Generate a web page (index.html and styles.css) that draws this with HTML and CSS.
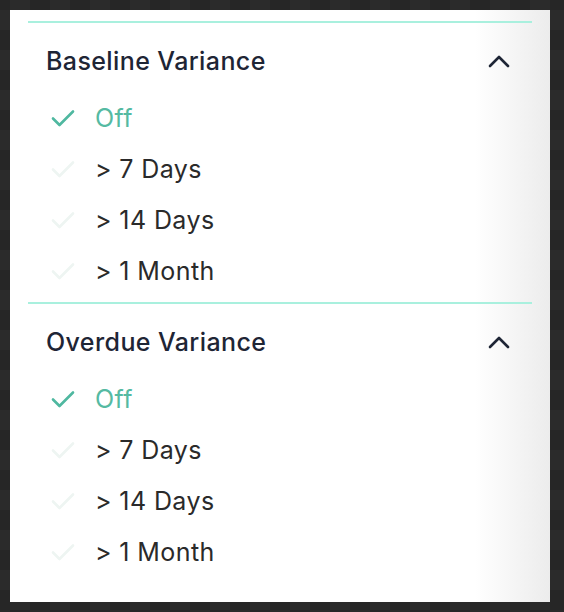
FILE: index.html
```html
<!DOCTYPE html>
<html lang="en">
<head>
<meta charset="utf-8">
<title>Variance Filters</title>
<link rel="stylesheet" href="styles.css">
</head>
<body>
<div class="panel">
  <section class="group">
    <div class="divider"></div>
    <div class="group-header">
      <span class="group-title">Baseline Variance</span>
      <svg class="chevron" width="22" height="14" viewBox="0 0 22 14"><path d="M2 12 L11 3 L20 12" fill="none" stroke="currentColor" stroke-width="2.6" stroke-linecap="round" stroke-linejoin="round"/></svg>
    </div>
    <ul class="options">
      <li class="option selected"><svg class="check" width="26" height="20" viewBox="0 0 26 20"><path d="M3 10.5 L9.5 17 L23 3.5" fill="none" stroke="currentColor" stroke-width="2.6" stroke-linecap="round" stroke-linejoin="round"/></svg><span>Off</span></li>
      <li class="option"><svg class="check" width="26" height="20" viewBox="0 0 26 20"><path d="M3 10.5 L9.5 17 L23 3.5" fill="none" stroke="currentColor" stroke-width="2.6" stroke-linecap="round" stroke-linejoin="round"/></svg><span>&gt; 7 Days</span></li>
      <li class="option"><svg class="check" width="26" height="20" viewBox="0 0 26 20"><path d="M3 10.5 L9.5 17 L23 3.5" fill="none" stroke="currentColor" stroke-width="2.6" stroke-linecap="round" stroke-linejoin="round"/></svg><span>&gt; 14 Days</span></li>
      <li class="option"><svg class="check" width="26" height="20" viewBox="0 0 26 20"><path d="M3 10.5 L9.5 17 L23 3.5" fill="none" stroke="currentColor" stroke-width="2.6" stroke-linecap="round" stroke-linejoin="round"/></svg><span>&gt; 1 Month</span></li>
    </ul>
  </section>
  <section class="group">
    <div class="divider"></div>
    <div class="group-header">
      <span class="group-title">Overdue Variance</span>
      <svg class="chevron" width="22" height="14" viewBox="0 0 22 14"><path d="M2 12 L11 3 L20 12" fill="none" stroke="currentColor" stroke-width="2.6" stroke-linecap="round" stroke-linejoin="round"/></svg>
    </div>
    <ul class="options">
      <li class="option selected"><svg class="check" width="26" height="20" viewBox="0 0 26 20"><path d="M3 10.5 L9.5 17 L23 3.5" fill="none" stroke="currentColor" stroke-width="2.6" stroke-linecap="round" stroke-linejoin="round"/></svg><span>Off</span></li>
      <li class="option"><svg class="check" width="26" height="20" viewBox="0 0 26 20"><path d="M3 10.5 L9.5 17 L23 3.5" fill="none" stroke="currentColor" stroke-width="2.6" stroke-linecap="round" stroke-linejoin="round"/></svg><span>&gt; 7 Days</span></li>
      <li class="option"><svg class="check" width="26" height="20" viewBox="0 0 26 20"><path d="M3 10.5 L9.5 17 L23 3.5" fill="none" stroke="currentColor" stroke-width="2.6" stroke-linecap="round" stroke-linejoin="round"/></svg><span>&gt; 14 Days</span></li>
      <li class="option"><svg class="check" width="26" height="20" viewBox="0 0 26 20"><path d="M3 10.5 L9.5 17 L23 3.5" fill="none" stroke="currentColor" stroke-width="2.6" stroke-linecap="round" stroke-linejoin="round"/></svg><span>&gt; 1 Month</span></li>
    </ul>
  </section>
</div>
</body>
</html>
```
FILE: styles.css
```css
html, body {
  margin: 0;
  padding: 0;
}
body {
  width: 564px;
  height: 612px;
  box-sizing: border-box;
  padding: 10px 14px 10px 10px;
  background-color: #262626;
  background-image: conic-gradient(#2b2b2b 25%, #262626 0 50%, #2b2b2b 0 75%, #262626 0);
  background-size: 40px 40px;
  background-position: 10px 10px;
  font-family: Inter, "Noto Sans", "Liberation Sans", sans-serif;
}
.panel {
  width: 540px;
  height: 592px;
  box-sizing: border-box;
  padding: 11px 18px 0 18px;
  background: linear-gradient(to right, #ffffff 0, #ffffff calc(100% - 75px), #ececec 100%);
}
.divider {
  height: 2px;
  background: #a9f0de;
}
.group-header {
  display: flex;
  align-items: center;
  justify-content: space-between;
  padding: 20px 22px 0 18px;
  height: 36px;
  margin-bottom: 13px;
}
.group-title {
  font-size: 25px;
  font-weight: 500;
  color: #1e2535;
  letter-spacing: 0.4px;
}
.chevron {
  color: #1e2535;
  display: block;
}
.options {
  list-style: none;
  margin: 0;
  padding: 0 0 6px 0;
}
.option {
  height: 51px;
  display: flex;
  align-items: center;
  padding-left: 22px;
  gap: 19px;
  font-size: 25px;
  letter-spacing: 0.4px;
  color: #2a2a2a;
}
.check {
  display: block;
  color: #eef5f2;
  flex: none;
}
.option.selected {
  color: #55baa2;
}
.option.selected .check {
  color: #4fb8a0;
}
```
